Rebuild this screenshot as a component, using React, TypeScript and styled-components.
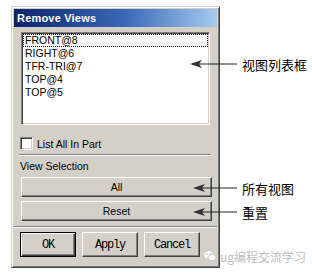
import React from "react";
import styled, { createGlobalStyle, css } from "styled-components";

const GlobalStyle = createGlobalStyle`
  html, body { margin: 0; padding: 0; background: #fff; }
  #root { width: 312px; height: 272px; overflow: hidden; }
`;

const Page = styled.div`
  position: relative;
  width: 312px;
  height: 272px;
  box-sizing: border-box;
  padding: 6px 0 0 11px;
  background: #fff;
`;

const Dialog = styled.div`
  width: 209px;
  height: 262px;
  box-sizing: border-box;
  background: #d4d0c8;
  border: 1px solid;
  border-color: #d4d0c8 #404040 #404040 #d4d0c8;
  box-shadow: inset 1px 1px #fff, inset -1px -1px #808080;
  padding: 2px;
  display: flex;
  flex-direction: column;
  font-family: "Liberation Sans", Arial, sans-serif;
  font-size: 10.5px;
  color: #000;
`;

const TitleBar = styled.div`
  height: 18px;
  line-height: 18px;
  padding-left: 3px;
  background: linear-gradient(90deg, #0a246a 0%, #3a6ab8 55%, #a6caf0 100%);
  color: #fff;
  font-weight: bold;
  font-size: 11px;
  letter-spacing: 0.2px;
`;

const Body = styled.div`
  padding: 0 0 0 7px;
  display: flex;
  flex-direction: column;
`;

const ListBox = styled.div`
  margin-top: 5px;
  width: 189px;
  height: 93px;
  box-sizing: border-box;
  background: #fff;
  border: 1px solid;
  border-color: #808080 #fff #fff #808080;
  box-shadow: inset 1px 1px #404040, inset -1px -1px #d4d0c8;
  padding: 1px;
`;

const ListItem = styled.div<{ $focused?: boolean }>`
  height: 13px;
  line-height: 13px;
  padding-left: 2px;
  white-space: nowrap;
  ${(p) =>
    p.$focused &&
    css`
      outline: 1px dotted #000;
      outline-offset: -1px;
    `}
`;

const CheckRow = styled.label`
  margin-top: 12px;
  margin-left: -1px;
  display: flex;
  align-items: center;
  gap: 4px;
  height: 13px;
`;

const CheckBox = styled.span`
  width: 13px;
  height: 13px;
  box-sizing: border-box;
  background: #fff;
  border: 1px solid;
  border-color: #808080 #fff #fff #808080;
  box-shadow: inset 1px 1px #404040, inset -1px -1px #d4d0c8;
`;

const Separator = styled.div<{ $inset?: boolean }>`
  height: 0;
  border-top: 1px solid #808080;
  border-bottom: 1px solid #fff;
  ${(p) =>
    p.$inset
      ? css`
          margin: 4px 0 0 -2px;
          width: 192px;
        `
      : css`
          margin-top: 5px;
        `}
`;

const SectionLabel = styled.div`
  margin-top: 4px;
  margin-left: -1px;
  height: 13px;
  line-height: 13px;
`;

const WideButton = styled.button<{ $gap: number }>`
  margin-top: ${(p) => p.$gap}px;
  width: 191px;
  height: 20px;
  box-sizing: border-box;
  background: #d4d0c8;
  border: 1px solid;
  border-color: #fff #404040 #404040 #fff;
  box-shadow: inset -1px -1px #808080, inset 1px 1px #d4d0c8;
  font-family: "Liberation Sans", Arial, sans-serif;
  font-size: 10.5px;
  color: #000;
  padding: 0;
`;

const Footer = styled.div`
  margin-top: 4px;
  padding-left: 6px;
  display: flex;
  gap: 6px;
`;

const PushButton = styled.button<{ $default?: boolean }>`
  width: 56px;
  height: 25px;
  box-sizing: border-box;
  background: #d4d0c8;
  padding: 0;
  font-family: "Liberation Mono", "Courier New", monospace;
  font-size: 12px;
  letter-spacing: -1.2px;
  color: #000;
  border: 1px solid;
  border-color: #fff #404040 #404040 #fff;
  box-shadow: inset -1px -1px #808080, inset 1px 1px #d4d0c8;
  ${(p) =>
    p.$default &&
    css`
      border: 1px solid #000;
      box-shadow: inset 1px 1px #fff, inset -1px -1px #404040,
        inset -2px -2px #808080;
    `}
`;

const Callout = styled.div<{ $x: number; $y: number }>`
  position: absolute;
  left: ${(p) => p.$x}px;
  top: ${(p) => p.$y - 9}px;
  height: 18px;
  display: flex;
  align-items: center;
  gap: 5px;
  white-space: nowrap;
  font-family: "Noto Sans CJK SC", sans-serif;
  font-size: 13px;
  color: #000;
`;

const Watermark = styled.div`
  position: absolute;
  left: 203px;
  top: 248px;
  height: 16px;
  display: flex;
  align-items: center;
  gap: 3px;
  white-space: nowrap;
  font-family: "Noto Sans CJK SC", sans-serif;
  font-size: 12px;
  color: #bdbdbd;
`;

const Arrow = ({ length }: { length: number }) => (
  <svg width={length} height="10" viewBox={`0 0 ${length} 10`}>
    <line x1="6" y1="5" x2={length} y2="5" stroke="#222" strokeWidth="1" />
    <path d="M0 5 L12 1 L9 5 L12 9 Z" fill="#333" />
  </svg>
);

const WeChatIcon = () => (
  <svg width="14" height="14" viewBox="0 0 14 14">
    <ellipse cx="5.5" cy="6" rx="5" ry="4.2" fill="#fff" stroke="#c8c8c8" />
    <ellipse cx="9" cy="8.5" rx="4" ry="3.3" fill="#fff" stroke="#c8c8c8" />
    <circle cx="4" cy="5" r="0.8" fill="#bbb" />
    <circle cx="7" cy="5" r="0.8" fill="#bbb" />
  </svg>
);

const views = ["FRONT@8", "RIGHT@6", "TFR-TRI@7", "TOP@4", "TOP@5"];

export default function App() {
  return (
    <>
      <GlobalStyle />
      <Page>
        <Dialog>
          <TitleBar>Remove Views</TitleBar>
          <Body>
            <ListBox>
              {views.map((v, i) => (
                <ListItem key={v} $focused={i === 0}>
                  {v}
                </ListItem>
              ))}
            </ListBox>
            <CheckRow>
              <CheckBox />
              List All In Part
            </CheckRow>
            <Separator $inset />
            <SectionLabel>View Selection</SectionLabel>
            <WideButton $gap={4}>All</WideButton>
            <WideButton $gap={4}>Reset</WideButton>
          </Body>
          <Separator />
          <Footer>
            <PushButton $default>OK</PushButton>
            <PushButton>Apply</PushButton>
            <PushButton>Cancel</PushButton>
          </Footer>
        </Dialog>
        <Callout $x={190} $y={64}>
          <Arrow length={47} />
          视图列表框
        </Callout>
        <Callout $x={193} $y={188}>
          <Arrow length={44} />
          所有视图
        </Callout>
        <Callout $x={193} $y={212}>
          <Arrow length={44} />
          重置
        </Callout>
        <Watermark>
          <WeChatIcon />
          ug编程交流学习
        </Watermark>
      </Page>
    </>
  );
}
